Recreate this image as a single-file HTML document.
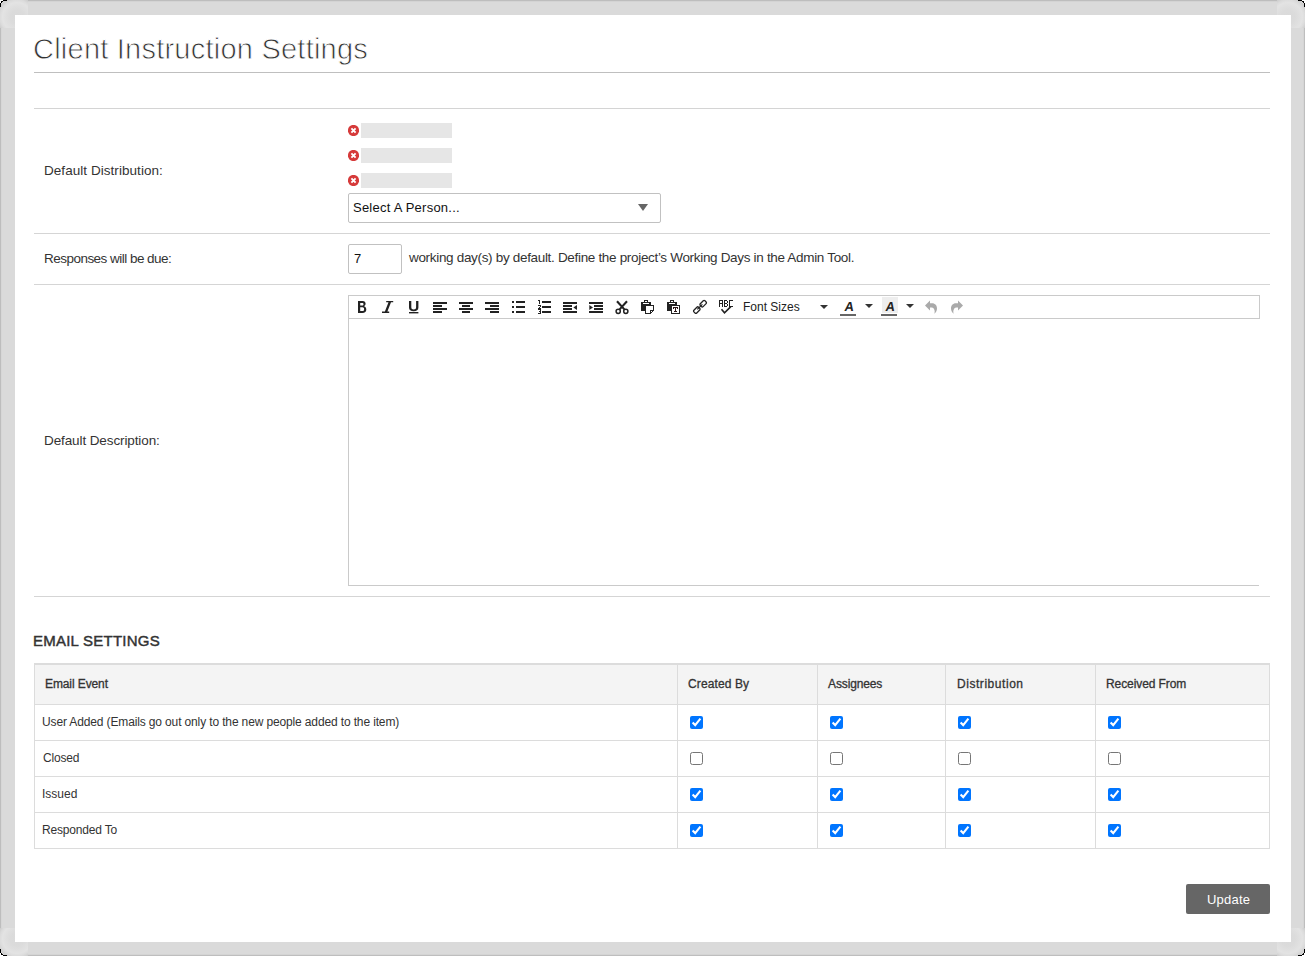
<!DOCTYPE html>
<html><head><meta charset="utf-8">
<style>
html,body{margin:0;padding:0;width:1306px;height:957px;overflow:hidden;background:#fff;}
body{position:relative;font-family:"Liberation Sans",sans-serif;}
.frame{position:absolute;left:0;top:0;width:1305px;height:956px;background:#dadada;box-shadow:inset 1px 1px 0 #bdbdbd, inset -1px -1px 0 #bebebe;}
.inner{position:absolute;left:15px;top:15px;width:1276px;height:927px;background:#fff;}
.a{position:absolute;}
.t{position:absolute;white-space:nowrap;line-height:20px;height:20px;}
.hl{position:absolute;height:1px;}
.gbox{position:absolute;left:361px;width:91px;height:15px;background:#e6e6e6;}
.rm{position:absolute;left:348px;width:11px;height:11px;}
.cb{position:absolute;margin:0;width:13px;height:13px;}
</style></head>
<body>
<div class="frame"></div>
<div class="a" style="left:1px;top:1px;width:1303px;height:1px;background:#d3d3d3;"></div>
<div class="a" style="left:1px;top:1px;width:1px;height:954px;background:#d6d6d6;"></div>
<div class="a" style="left:1px;top:954px;width:1303px;height:1px;background:#d4d4d4;"></div>
<div class="a" style="left:1303px;top:1px;width:1px;height:954px;background:#d5d5d5;"></div>
<div class="a" style="left:0px;top:0px;width:28px;height:28px;background:radial-gradient(circle at 17px 17px, #dadada 0px, #dbdbdb 7px, #dfdfdf 11px, #e3e3e3 14.5px, #dcdcdc 17px, #cfcfcf 19.5px, rgba(218,218,218,0) 21px);"></div>
<div class="a" style="left:1277px;top:0px;width:28px;height:28px;background:radial-gradient(circle at 11px 17px, #dadada 0px, #dbdbdb 7px, #dfdfdf 11px, #e3e3e3 14.5px, #dcdcdc 17px, #cfcfcf 19.5px, rgba(218,218,218,0) 21px);"></div>
<div class="a" style="left:0px;top:928px;width:28px;height:28px;background:radial-gradient(circle at 17px 11px, #dadada 0px, #dbdbdb 7px, #dfdfdf 11px, #e3e3e3 14.5px, #dcdcdc 17px, #cfcfcf 19.5px, rgba(218,218,218,0) 21px);"></div>
<div class="a" style="left:1277px;top:928px;width:28px;height:28px;background:radial-gradient(circle at 11px 11px, #dadada 0px, #dbdbdb 7px, #dfdfdf 11px, #e3e3e3 14.5px, #dcdcdc 17px, #cfcfcf 19.5px, rgba(218,218,218,0) 21px);"></div>
<div class="inner"></div>
<svg class="a" style="left:0;top:0" width="1306" height="957" shape-rendering="crispEdges">
<g fill="#fff"><rect x="0" y="0" width="3" height="1"/><rect x="0" y="0" width="1" height="3"/><rect x="1302" y="0" width="3" height="1"/><rect x="1304" y="0" width="1" height="3"/><rect x="0" y="955" width="3" height="1"/><rect x="0" y="953" width="1" height="3"/><rect x="1302" y="955" width="3" height="1"/><rect x="1304" y="953" width="1" height="3"/></g>
<g fill="#000">
<rect x="3" y="0" width="4" height="1"/><rect x="1" y="1" width="2" height="1"/><rect x="1" y="2" width="1" height="1"/><rect x="0" y="3" width="1" height="4"/>
<rect x="1298" y="0" width="4" height="1"/><rect x="1302" y="1" width="2" height="1"/><rect x="1303" y="2" width="1" height="1"/><rect x="1304" y="3" width="1" height="4"/>
<rect x="3" y="955" width="4" height="1"/><rect x="1" y="954" width="2" height="1"/><rect x="1" y="953" width="1" height="1"/><rect x="0" y="949" width="1" height="4"/>
<rect x="1298" y="955" width="4" height="1"/><rect x="1302" y="954" width="2" height="1"/><rect x="1303" y="953" width="1" height="1"/><rect x="1304" y="949" width="1" height="4"/>
</g></svg>

<div class="hl" style="left:34px;top:72px;width:1236px;background:#bfbfbf;"></div>
<div class="hl" style="left:34px;top:108px;width:1236px;background:#d4d4d4;"></div>

<!-- row 1 -->
<svg class="rm" style="top:125px" viewBox="0 0 11 11"><circle cx="5.5" cy="5.5" r="5.6" fill="#d63a3a"/><path d="M3.4 3.4L7.6 7.6M7.6 3.4L3.4 7.6" stroke="#fff" stroke-width="1.9"/></svg>
<svg class="rm" style="top:150px" viewBox="0 0 11 11"><circle cx="5.5" cy="5.5" r="5.6" fill="#d63a3a"/><path d="M3.4 3.4L7.6 7.6M7.6 3.4L3.4 7.6" stroke="#fff" stroke-width="1.9"/></svg>
<svg class="rm" style="top:175px" viewBox="0 0 11 11"><circle cx="5.5" cy="5.5" r="5.6" fill="#d63a3a"/><path d="M3.4 3.4L7.6 7.6M7.6 3.4L3.4 7.6" stroke="#fff" stroke-width="1.9"/></svg>
<div class="gbox" style="top:123px"></div>
<div class="gbox" style="top:148px"></div>
<div class="gbox" style="top:173px"></div>
<div class="a" style="left:348px;top:193px;width:311px;height:28px;border:1px solid #c1c1c1;border-radius:2px;"></div>
<svg class="a" style="left:638px;top:204px" width="10" height="7" viewBox="0 0 10 7"><path d="M0 0H10L5 7Z" fill="#666"/></svg>
<div class="hl" style="left:34px;top:233px;width:1236px;background:#d5d5d5;"></div>

<!-- row 2 -->
<div class="a" style="left:348px;top:244px;width:52px;height:28px;border:1px solid #c1c1c1;border-radius:2px;"></div>
<div class="hl" style="left:34px;top:284px;width:1236px;background:#d5d5d5;"></div>

<!-- row 3 editor -->
<div class="a" style="left:348px;top:295px;width:910px;height:22px;border:1px solid #cacaca;"></div>
<div class="a" style="left:348px;top:318px;width:1px;height:268px;background:#cacaca;"></div>
<div class="a" style="left:348px;top:585px;width:911px;height:1px;background:#cacaca;"></div>
<svg class="a" style="left:348px;top:295px" width="912" height="24" viewBox="348 295 912 24">
<g fill="#222">
<!-- Bold B -->
<path fill-rule="evenodd" d="M358 301H362.6C364.6 301 365.6 302.2 365.6 303.8C365.6 305 364.9 305.9 363.9 306.3C365.2 306.6 366.3 307.7 366.3 309.4C366.3 311.5 364.9 313 362.4 313H358ZM360.2 302.9V305.5H362.3C363.1 305.5 363.5 305 363.5 304.2C363.5 303.4 363.1 302.9 362.3 302.9ZM360.2 307.3V311.1H362.5C363.5 311.1 364.1 310.4 364.1 309.2C364.1 308 363.5 307.3 362.5 307.3Z"/>
<!-- Italic I -->
<path d="M386.2 301H393.2V302.3H391L387.4 311.6H389.2V312.9H382V311.6H384.9L388.5 302.3H386.2Z"/>
<!-- Underline U -->
<path d="M409 301H411.3V307.2C411.3 308.7 412.2 309.4 413.7 309.4C415.2 309.4 416.1 308.7 416.1 307.2V301H418.4V307.4C418.4 309.9 416.6 311.2 413.7 311.2C410.8 311.2 409 309.9 409 307.4Z"/>
<rect x="409" y="312" width="9.4" height="1.4"/>
</g>
<g fill="#222" shape-rendering="crispEdges">
<!-- align left -->
<rect x="433" y="302" width="14" height="2"/><rect x="433" y="305" width="9" height="2"/><rect x="433" y="308" width="14" height="2"/><rect x="433" y="311" width="9" height="2"/>
<!-- align center -->
<rect x="459" y="302" width="14" height="2"/><rect x="462" y="305" width="8" height="2"/><rect x="459" y="308" width="14" height="2"/><rect x="462" y="311" width="8" height="2"/>
<!-- align right -->
<rect x="485" y="302" width="14" height="2"/><rect x="490" y="305" width="9" height="2"/><rect x="485" y="308" width="14" height="2"/><rect x="490" y="311" width="9" height="2"/>
<!-- bullets -->
<rect x="512" y="301" width="2" height="2"/><rect x="516" y="301" width="9" height="2"/>
<rect x="512" y="306" width="2" height="2"/><rect x="516" y="306" width="9" height="2"/>
<rect x="512" y="311" width="2" height="2"/><rect x="516" y="311" width="9" height="2"/>
<!-- numbered -->
<rect x="542" y="301" width="9" height="2"/><rect x="542" y="306" width="9" height="2"/><rect x="542" y="311" width="9" height="2"/>
<rect x="539" y="300" width="1" height="4"/><rect x="538" y="300" width="1" height="1"/>
<rect x="538" y="305" width="3" height="1"/><rect x="540" y="306" width="1" height="1"/><rect x="539" y="307" width="1" height="1"/><rect x="538" y="308" width="3" height="1"/>
<rect x="538" y="309" width="3" height="1"/><rect x="540" y="310" width="1" height="1"/><rect x="539" y="311" width="2" height="1"/><rect x="540" y="312" width="1" height="1"/><rect x="538" y="313" width="3" height="1"/>
<!-- outdent -->
<rect x="563" y="302" width="14" height="2"/><rect x="563" y="305" width="9" height="2"/><rect x="563" y="308" width="9" height="2"/><rect x="563" y="311" width="14" height="2"/>
<!-- indent -->
<rect x="589" y="302" width="14" height="2"/><rect x="594" y="305" width="9" height="2"/><rect x="594" y="308" width="9" height="2"/><rect x="589" y="311" width="14" height="2"/>
<!-- spellcheck letters -->
<rect x="719" y="300" width="4" height="1"/><rect x="719" y="300" width="1" height="7"/><rect x="722" y="300" width="1" height="7"/><rect x="719" y="303" width="4" height="1"/>
<rect x="724" y="300" width="3" height="1"/><rect x="724" y="300" width="1" height="7"/><rect x="727" y="301" width="1" height="2"/><rect x="724" y="303" width="3" height="1"/><rect x="727" y="304" width="1" height="2"/><rect x="724" y="306" width="3" height="1"/>
<rect x="729" y="300" width="4" height="1"/><rect x="729" y="300" width="1" height="7"/><rect x="729" y="306" width="4" height="1"/>
<!-- paste -->
<rect x="641" y="302" width="10" height="9"/>
<rect x="671" y="302" width="0" height="0"/>
<rect x="667" y="302" width="10" height="9"/>
</g>
<g fill="#222">
<path d="M573.3 307.5L577 305V310Z"/>
<path d="M593 307.5L589.3 305V310Z"/>
</g>
<!-- scissors -->
<g stroke="#222" fill="none">
<path d="M617 301.3L624.4 309.4M627 301.3L619.6 309.4" stroke-width="2.1"/>
<circle cx="618.2" cy="311.3" r="2.1" stroke-width="1.5"/>
<circle cx="625.8" cy="311.3" r="2.1" stroke-width="1.5"/>
</g>
<!-- paste details -->
<g stroke="#222" fill="none" shape-rendering="crispEdges">
<path d="M644.5 302V300.5H647.5V302"/>
<path d="M670.5 302V300.5H673.5V302"/>
</g>
<rect x="643" y="303" width="6" height="1" fill="#fff" shape-rendering="crispEdges"/>
<rect x="669" y="303" width="6" height="1" fill="#fff" shape-rendering="crispEdges"/>
<path d="M645.5 305.5H653.5V310.5L650.5 313.5H645.5Z" fill="#fff" stroke="#222" shape-rendering="crispEdges"/>
<path d="M650.5 313V310.5H653" fill="none" stroke="#222" shape-rendering="crispEdges"/>
<rect x="671.5" y="305.5" width="8" height="8" fill="#fff" stroke="#222" shape-rendering="crispEdges"/>
<g fill="#2a1515" shape-rendering="crispEdges">
<rect x="673" y="307" width="5" height="1"/><rect x="675" y="307" width="1" height="5"/><rect x="674" y="311" width="3" height="1"/><rect x="673" y="307" width="1" height="2"/><rect x="677" y="307" width="1" height="2"/>
</g>
<!-- link -->
<g stroke="#222" fill="none" stroke-width="1.3">
<rect x="-3.3" y="-2" width="6.6" height="4" rx="1.2" transform="translate(703.2 303.7) rotate(-45)"/>
<rect x="-3.3" y="-2" width="6.6" height="4" rx="1.2" transform="translate(696.8 310.1) rotate(-45)"/>
<path d="M697.3 309.4L702.4 304.3" stroke-width="1.2"/>
</g>
<!-- spellcheck tick -->
<path d="M721.5 309.2L724.5 312.8L730.8 306.6" stroke="#222" stroke-width="1.6" fill="none"/>
<!-- font sizes arrow -->
<path d="M820 305H828L824 309Z" fill="#333"/>
<!-- forecolor -->
<rect x="882" y="297" width="16" height="16" fill="#eeeeee" shape-rendering="crispEdges"/>
<rect x="840" y="314" width="16" height="2" fill="#666" shape-rendering="crispEdges"/>
<rect x="881" y="314" width="16" height="2" fill="#666" shape-rendering="crispEdges"/>
<text transform="translate(848.6 311) skewX(-9)" font-family="Liberation Sans" font-weight="bold" font-size="13" text-anchor="middle" fill="#222">A</text>
<text transform="translate(889.8 311) skewX(-9)" font-family="Liberation Sans" font-weight="bold" font-size="13" text-anchor="middle" fill="#222">A</text>
<path d="M865 304H873L869 308Z" fill="#333"/>
<path d="M906 304H914L910 308Z" fill="#333"/>
<!-- undo / redo -->
<g fill="#aaa">
<path id="undo" d="M925 305.5L930 300.4V303.3H932C935.3 303.3 937 305.8 937 308.4C937 310.5 935.9 312.5 934.3 313.8C934.9 312.2 934.8 310.4 934.1 309.2C933.4 308 932.3 307.6 930.5 307.6H930V310.4Z"/>
<path d="M925 305.5L930 300.4V303.3H932C935.3 303.3 937 305.8 937 308.4C937 310.5 935.9 312.5 934.3 313.8C934.9 312.2 934.8 310.4 934.1 309.2C933.4 308 932.3 307.6 930.5 307.6H930V310.4Z" transform="matrix(-1 0 0 1 1888 0)"/>
</g>
</svg>

<div class="hl" style="left:34px;top:596px;width:1236px;background:#d5d5d5;"></div>

<!-- table -->
<div class="a" style="left:34px;top:663px;width:1236px;height:2px;background:#dcdcdc;"></div>
<div class="a" style="left:35px;top:665px;width:1234px;height:39px;background:#f4f4f4;"></div>
<div class="a" style="left:34px;top:704px;width:1236px;height:1px;background:#dcdcdc;"></div>
<div class="a" style="left:34px;top:740px;width:1236px;height:1px;background:#dcdcdc;"></div>
<div class="a" style="left:34px;top:776px;width:1236px;height:1px;background:#dcdcdc;"></div>
<div class="a" style="left:34px;top:812px;width:1236px;height:1px;background:#dcdcdc;"></div>
<div class="a" style="left:34px;top:848px;width:1236px;height:1px;background:#dcdcdc;"></div>
<div class="a" style="left:34px;top:663px;width:1px;height:186px;background:#dcdcdc;"></div>
<div class="a" style="left:677px;top:663px;width:1px;height:186px;background:#dcdcdc;"></div>
<div class="a" style="left:817px;top:663px;width:1px;height:186px;background:#dcdcdc;"></div>
<div class="a" style="left:945px;top:663px;width:1px;height:186px;background:#dcdcdc;"></div>
<div class="a" style="left:1095px;top:663px;width:1px;height:186px;background:#dcdcdc;"></div>
<div class="a" style="left:1269px;top:663px;width:1px;height:186px;background:#dcdcdc;"></div>
<input type="checkbox" class="cb" style="left:690px;top:716px" checked>
<input type="checkbox" class="cb" style="left:830px;top:716px" checked>
<input type="checkbox" class="cb" style="left:958px;top:716px" checked>
<input type="checkbox" class="cb" style="left:1108px;top:716px" checked>
<input type="checkbox" class="cb" style="left:690px;top:752px">
<input type="checkbox" class="cb" style="left:830px;top:752px">
<input type="checkbox" class="cb" style="left:958px;top:752px">
<input type="checkbox" class="cb" style="left:1108px;top:752px">
<input type="checkbox" class="cb" style="left:690px;top:788px" checked>
<input type="checkbox" class="cb" style="left:830px;top:788px" checked>
<input type="checkbox" class="cb" style="left:958px;top:788px" checked>
<input type="checkbox" class="cb" style="left:1108px;top:788px" checked>
<input type="checkbox" class="cb" style="left:690px;top:824px" checked>
<input type="checkbox" class="cb" style="left:830px;top:824px" checked>
<input type="checkbox" class="cb" style="left:958px;top:824px" checked>
<input type="checkbox" class="cb" style="left:1108px;top:824px" checked>

<!-- update button -->
<div class="a" style="left:1186px;top:884px;width:84px;height:30px;background:#666;border-radius:2px;"></div>

<div class="t" style="left:33px;top:39px;font-size:29px;font-weight:normal;color:#333;letter-spacing:0.231px;-webkit-text-stroke:0.8px #fff;">Client Instruction Settings</div>
<div class="t" style="left:44px;top:161px;font-size:13.5px;font-weight:normal;color:#333;letter-spacing:0.05px;">Default Distribution:</div>
<div class="t" style="left:44px;top:249px;font-size:13.5px;font-weight:normal;color:#333;letter-spacing:-0.524px;">Responses will be due:</div>
<div class="t" style="left:44px;top:431px;font-size:13.5px;font-weight:normal;color:#333;letter-spacing:-0.105px;">Default Description:</div>
<div class="t" style="left:353px;top:198px;font-size:13px;font-weight:normal;color:#111;letter-spacing:0.235px;">Select A Person...</div>
<div class="t" style="left:354px;top:249px;font-size:13px;font-weight:normal;color:#111;">7</div>
<div class="t" style="left:409px;top:248px;font-size:13.5px;font-weight:normal;color:#333;letter-spacing:-0.321px;">working day(s) by default. Define the project’s Working Days in the Admin Tool.</div>
<div class="t" style="left:743px;top:297px;font-size:12px;font-weight:normal;color:#222;">Font Sizes</div>
<div class="t" style="left:33px;top:631px;font-size:15px;font-weight:normal;color:#333;letter-spacing:0.231px;-webkit-text-stroke:0.45px #333;">EMAIL SETTINGS</div>
<div class="t" style="left:45px;top:674px;font-size:12px;font-weight:normal;color:#333;letter-spacing:-0.1px;-webkit-text-stroke:0.3px #333;">Email Event</div>
<div class="t" style="left:688px;top:674px;font-size:12px;font-weight:normal;color:#333;letter-spacing:0.111px;-webkit-text-stroke:0.3px #333;">Created By</div>
<div class="t" style="left:828px;top:674px;font-size:12px;font-weight:normal;color:#333;letter-spacing:-0.125px;-webkit-text-stroke:0.3px #333;">Assignees</div>
<div class="t" style="left:957px;top:674px;font-size:12px;font-weight:normal;color:#333;letter-spacing:0.545px;-webkit-text-stroke:0.3px #333;">Distribution</div>
<div class="t" style="left:1106px;top:674px;font-size:12px;font-weight:normal;color:#333;letter-spacing:-0.083px;-webkit-text-stroke:0.3px #333;">Received From</div>
<div class="t" style="left:42px;top:712px;font-size:12px;font-weight:normal;color:#333;letter-spacing:-0.136px;">User Added (Emails go out only to the new people added to the item)</div>
<div class="t" style="left:43px;top:748px;font-size:12px;font-weight:normal;color:#333;letter-spacing:-0.2px;">Closed</div>
<div class="t" style="left:42px;top:784px;font-size:12px;font-weight:normal;color:#333;">Issued</div>
<div class="t" style="left:42px;top:820px;font-size:12px;font-weight:normal;color:#333;letter-spacing:-0.182px;">Responded To</div>
<div class="t" style="left:1207px;top:890px;font-size:13px;font-weight:normal;color:#fff;letter-spacing:0.2px;">Update</div>
</body></html>
